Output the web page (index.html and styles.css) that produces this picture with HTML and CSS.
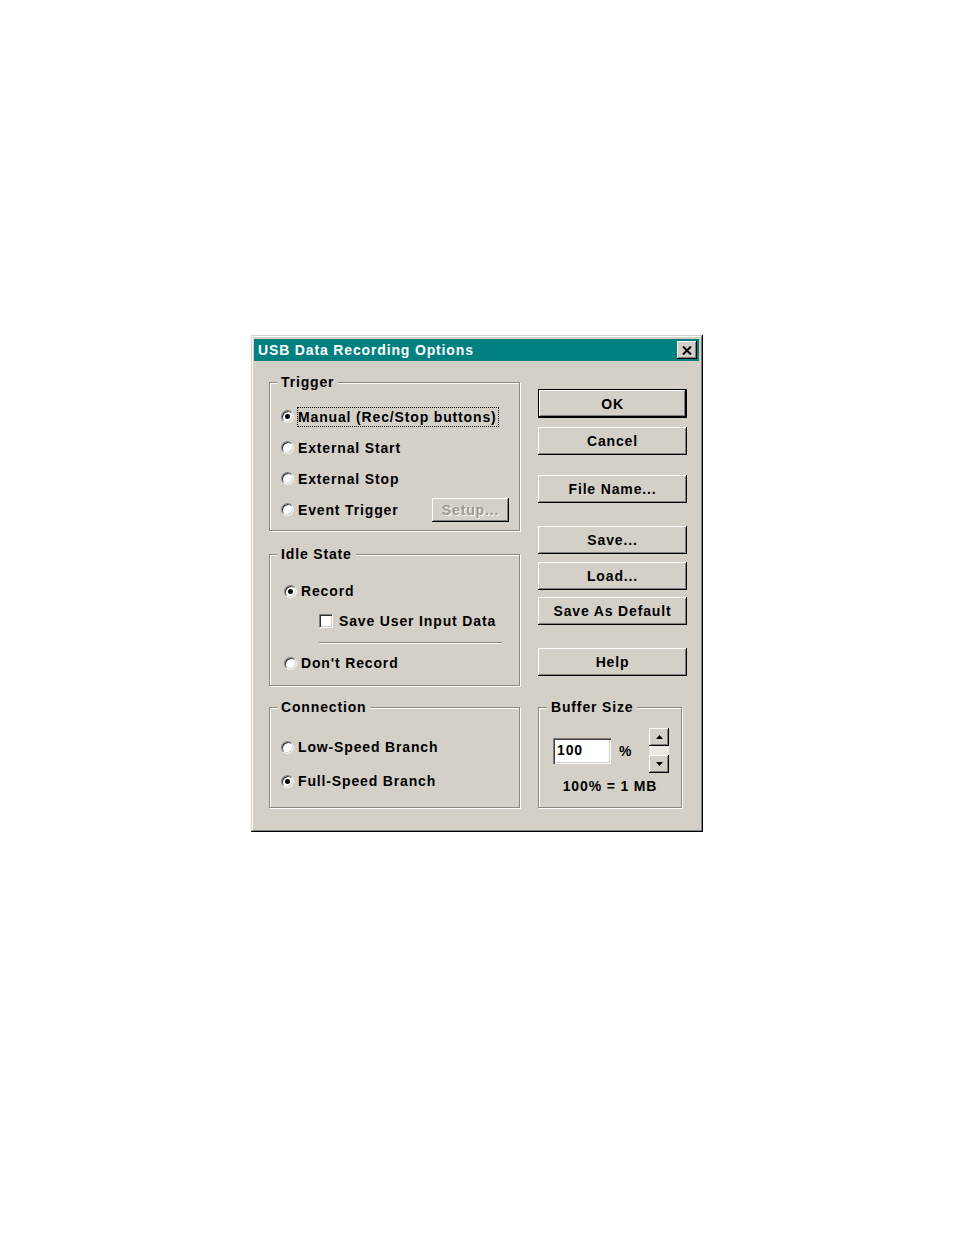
FILE: index.html
```html
<!DOCTYPE html>
<html>
<head>
<meta charset="utf-8">
<title>USB Data Recording Options</title>
<link rel="stylesheet" href="styles.css">
</head>
<body>
<div class="page">
  <div class="dialog">
    <div class="titlebar">
      <span class="title">USB Data Recording Options</span>
      <span class="close"><svg width="10" height="9" viewBox="0 0 10 9"><path d="M1 0.5 L9 8.5 M9 0.5 L1 8.5" stroke="#000" stroke-width="2"/></svg></span>
    </div>
    <div class="content">
      <div class="left">
        <div class="group trigger">
          <div class="legend">Trigger</div>
          <div class="row first"><span class="radio checked"></span><span class="focus">Manual (Rec/Stop buttons)</span></div>
          <div class="row"><span class="radio"></span><span>External Start</span></div>
          <div class="row"><span class="radio"></span><span>External Stop</span></div>
          <div class="row"><span class="radio"></span><span>Event Trigger</span><span class="btn small disabled">Setup...</span></div>
        </div>
        <div class="group idle">
          <div class="legend">Idle State</div>
          <div class="row r-record"><span class="radio checked"></span><span>Record</span></div>
          <div class="row r-check"><span class="check"></span><span>Save User Input Data</span></div>
          <div class="sep"></div>
          <div class="row r-dont"><span class="radio"></span><span>Don't Record</span></div>
        </div>
        <div class="group conn">
          <div class="legend">Connection</div>
          <div class="row r-low"><span class="radio"></span><span>Low-Speed Branch</span></div>
          <div class="row r-full"><span class="radio checked"></span><span>Full-Speed Branch</span></div>
        </div>
      </div>
      <div class="right">
        <div class="btn default b-ok">OK</div>
        <div class="btn b-cancel">Cancel</div>
        <div class="btn b-file">File Name...</div>
        <div class="btn b-save">Save...</div>
        <div class="btn b-load">Load...</div>
        <div class="btn b-def">Save As Default</div>
        <div class="btn b-help">Help</div>
        <div class="group buffer">
          <div class="legend">Buffer Size</div>
          <div class="buf-row">
            <div class="input">100</div>
            <span class="pct">%</span>
            <div class="spin">
              <div class="spin-btn"><svg width="7" height="4" viewBox="0 0 7 4"><path d="M3.5 0 L7 4 L0 4 Z" fill="#000"/></svg></div>
              <div class="spin-mid"></div>
              <div class="spin-btn"><svg width="7" height="4" viewBox="0 0 7 4"><path d="M0 0 L7 0 L3.5 4 Z" fill="#000"/></svg></div>
            </div>
          </div>
          <div class="note">100% = 1 MB</div>
        </div>
      </div>
    </div>
  </div>
</div>
</body>
</html>
```

FILE: styles.css
```css
* { box-sizing: border-box; }
html, body { margin: 0; padding: 0; background: #fff; }
body {
  font-family: "Liberation Sans", Arial, sans-serif;
  font-weight: bold;
  font-size: 14px;
  letter-spacing: 0.85px;
  line-height: 16px;
  color: #000;
}
.page { padding: 335px 0 0 251px; width: 954px; height: 1235px; }

.dialog {
  width: 452px;
  height: 497px;
  background: #d4d0c8;
  padding: 4px 4px 3px 3px;
  box-shadow: inset -1px -1px #000, inset 1px 1px #d4d0c8, inset -2px -2px #808080, inset 2px 2px #fff;
}
.titlebar {
  height: 22px;
  background: #008080;
  display: flex;
  align-items: center;
  padding: 0 2px 0 4px;
}
.title { color: #fff; flex: 1; }
.close {
  width: 20px; height: 18px;
  background: #d4d0c8;
  display: flex; align-items: center; justify-content: center;
  box-shadow: inset -1px -1px #000, inset 1px 1px #fff, inset -2px -2px #808080;
}

.content {
  display: flex;
  padding: 21px 0 0 15px;
  gap: 18px;
}
.left { width: 251px; display: flex; flex-direction: column; }
.right { width: 149px; display: flex; flex-direction: column; padding-top: 7px; }

.group {
  border: 1px solid #8c877c;
  box-shadow: inset 1px 1px 0 #fff, 1px 1px 0 #fff;
}
.legend {
  width: fit-content;
  height: 16px;
  margin-top: -9px;
  padding: 0 4px;
  background: #d4d0c8;
}
.row { display: flex; align-items: center; }
.row .radio { margin-right: 4px; flex: none; }

.radio {
  width: 13px; height: 13px;
  border-radius: 50%;
  background: #fff;
  border: 1px solid;
  border-color: #808080 #f4f2ee #f4f2ee #808080;
  box-shadow: inset 1px 1px 0 #303030, inset -1px -1px 0 #d4d0c8;
  display: flex; align-items: center; justify-content: center;
}
.radio.checked::after {
  content: "";
  width: 5px; height: 5px;
  border-radius: 50%;
  background: #000;
}
.check {
  width: 14px; height: 14px;
  flex: none;
  background: #fff;
  border: 1px solid;
  border-color: #808080 #fff #fff #808080;
  box-shadow: inset 1px 1px 0 #303030, inset -1px -1px 0 #d4d0c8;
}
.row .check { margin-right: 6px; }

.focus {
  border: 1px dotted #000;
  padding: 1px 1px 1px 0;
  margin-left: -1px;
}

/* Trigger */
.trigger { padding: 0 10px 5px 11px; }
.trigger .legend { margin-left: -4px; }
.trigger .row { height: 31px; }
.trigger .row.first { margin-top: 11px; }

/* Idle */
.idle { margin-top: 23px; padding: 0 10px 10px 14px; }
.idle .legend { margin-left: -7px; }
.idle .row { height: 24px; }
.r-record { margin-top: 17px; }
.r-check { margin-top: 6px; margin-left: 35px; }
.sep {
  margin: 9px 0 0 35px;
  width: 183px;
  height: 2px;
  border-top: 1px solid #8c877c;
  border-bottom: 1px solid #fff;
}
.r-dont { margin-top: 7px; }

/* Connection */
.conn { margin-top: 21px; padding: 0 10px 14px 11px; }
.conn .legend { margin-left: -4px; }
.conn .row { height: 24px; }
.r-low { margin-top: 20px; }
.r-full { margin-top: 10px; }

/* Buttons */
.btn {
  height: 28px;
  background: #d4d0c8;
  display: flex; align-items: center; justify-content: center;
  box-shadow: inset -1px -1px #000, inset 1px 1px #fff, inset -2px -2px #808080;
}
.btn.default {
  height: 29px;
  box-shadow: inset 0 0 0 1px #000, inset -2px -2px #000, inset 2px 2px #fff, inset -3px -3px #808080;
}
.btn.small { width: 77px; height: 24px; margin-left: auto; }
.btn.disabled { color: #9c978c; text-shadow: 1px 1px 0 #fff; }
.b-cancel { margin-top: 9px; }
.b-file { margin-top: 20px; }
.b-save { margin-top: 23px; }
.b-load { margin-top: 8px; }
.b-def { margin-top: 7px; }
.b-help { margin-top: 23px; }

/* Buffer */
.buffer { width: 144px; margin-top: 31px; padding: 0 0 13px 14px; }
.buffer .legend { margin-left: -6px; }
.buf-row { display: flex; align-items: center; margin-top: 13px; height: 45px; }
.input {
  width: 58px; height: 26px;
  background: #fff;
  padding: 4px 0 0 4px;
  box-shadow: inset 1px 1px #808080, inset 2px 2px #404040, inset -1px -1px #fff, inset -2px -2px #d4d0c8;
}
.pct { margin-left: 8px; }
.spin { margin-left: 17px; width: 20px; display: flex; flex-direction: column; }
.spin-btn {
  height: 18px;
  background: #d4d0c8;
  display: flex; align-items: center; justify-content: center;
  box-shadow: inset -1px -1px #000, inset 1px 1px #fff, inset -2px -2px #808080;
}
.spin-mid { height: 9px; background: #ece9e2; }
.note { margin-top: 5px; text-align: center; padding-right: 14px; }
```
